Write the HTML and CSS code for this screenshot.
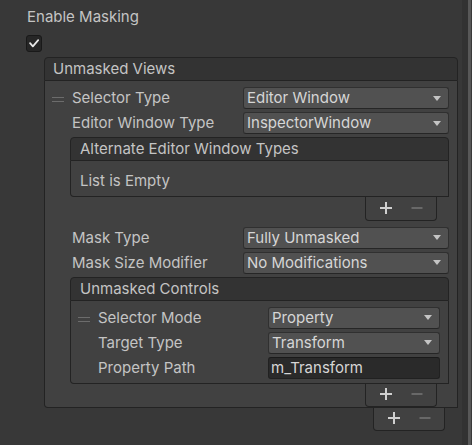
FILE: index.html
```html
<!DOCTYPE html>
<html>
<head>
<meta charset="utf-8">
<link rel="stylesheet" href="styles.css">
</head>
<body>
<div class="page">
  <div class="content">
    <div class="title">Enable Masking</div>
    <div class="check-row">
      <span class="checkbox">
        <svg width="16" height="17" viewBox="0 0 16 17"><polyline points="3.5,8 6.7,11.8 12.8,4.6" fill="none" stroke="#e8e8e8" stroke-width="2" stroke-linejoin="round" stroke-linecap="round"/></svg>
      </span>
    </div>

    <div class="list outer">
      <div class="list-header">Unmasked Views</div>
      <div class="list-body outer-body">
        <div class="element">
          <div class="handle-col"><span class="handle"></span></div>
          <div class="fields">
            <div class="row">
              <span class="label outer-label">Selector Type</span>
              <div class="dropdown"><span>Editor Window</span><svg class="arrow" width="8" height="5" viewBox="0 0 8 5"><polygon points="0,0 8,0 4,5" fill="#c4c4c4"/></svg></div>
            </div>
            <div class="row">
              <span class="label outer-label">Editor Window Type</span>
              <div class="dropdown"><span>InspectorWindow</span><svg class="arrow" width="8" height="5" viewBox="0 0 8 5"><polygon points="0,0 8,0 4,5" fill="#c4c4c4"/></svg></div>
            </div>

            <div class="list inner first">
              <div class="list-header inner-header">Alternate Editor Window Types</div>
              <div class="list-body empty">List is Empty</div>
              <div class="footer tall">
                <svg class="plus" width="12" height="12" viewBox="0 0 12 12"><path d="M6 0V12M0 6H12" stroke="#d0d0d0" stroke-width="2"/></svg>
                <svg class="minus" width="12" height="12" viewBox="0 0 12 12"><path d="M0.5 6H11.5" stroke="#767676" stroke-width="1.5"/></svg>
              </div>
            </div>

            <div class="row">
              <span class="label outer-label">Mask Type</span>
              <div class="dropdown"><span>Fully Unmasked</span><svg class="arrow" width="8" height="5" viewBox="0 0 8 5"><polygon points="0,0 8,0 4,5" fill="#c4c4c4"/></svg></div>
            </div>
            <div class="row">
              <span class="label outer-label">Mask Size Modifier</span>
              <div class="dropdown"><span>No Modifications</span><svg class="arrow" width="8" height="5" viewBox="0 0 8 5"><polygon points="0,0 8,0 4,5" fill="#c4c4c4"/></svg></div>
            </div>

            <div class="list inner second">
              <div class="list-header inner-header">Unmasked Controls</div>
              <div class="list-body inner-body">
                <div class="element">
                  <div class="handle-col"><span class="handle"></span></div>
                  <div class="fields">
                    <div class="row">
                      <span class="label inner-label">Selector Mode</span>
                      <div class="dropdown"><span>Property</span><svg class="arrow" width="8" height="5" viewBox="0 0 8 5"><polygon points="0,0 8,0 4,5" fill="#c4c4c4"/></svg></div>
                    </div>
                    <div class="row">
                      <span class="label inner-label">Target Type</span>
                      <div class="dropdown"><span>Transform</span><svg class="arrow" width="8" height="5" viewBox="0 0 8 5"><polygon points="0,0 8,0 4,5" fill="#c4c4c4"/></svg></div>
                    </div>
                    <div class="row last">
                      <span class="label inner-label">Property Path</span>
                      <div class="textfield">m_Transform</div>
                    </div>
                  </div>
                </div>
              </div>
              <div class="footer">
                <svg class="plus" width="12" height="12" viewBox="0 0 12 12"><path d="M6 0V12M0 6H12" stroke="#d0d0d0" stroke-width="2"/></svg>
                <svg class="minus" width="12" height="12" viewBox="0 0 12 12"><path d="M0.5 6H11.5" stroke="#767676" stroke-width="1.5"/></svg>
              </div>
            </div>
          </div>
        </div>
      </div>
      <div class="footer outer-footer">
        <svg class="plus" width="12" height="12" viewBox="0 0 12 12"><path d="M6 0V12M0 6H12" stroke="#d0d0d0" stroke-width="2"/></svg>
        <svg class="minus" width="12" height="12" viewBox="0 0 12 12"><path d="M0.5 6H11.5" stroke="#767676" stroke-width="1.5"/></svg>
      </div>
    </div>
  </div>
  <div class="edge"></div>
</div>
</body>
</html>
```

FILE: styles.css
```css
* { box-sizing: border-box; }

html, body {
  margin: 0;
  padding: 0;
  width: 472px;
  height: 445px;
  overflow: hidden;
  background: #383838;
}

body {
  font-family: "Inter", "Noto Sans", "DejaVu Sans", sans-serif;
  font-size: 15px;
  line-height: 22px;
  color: #c4c4c4;
}

.page {
  display: flex;
  height: 445px;
}

.content {
  width: 462px;
  padding-top: 6px;
}

.edge {
  flex: 1;
  background: linear-gradient(to right, #323232 0, #323232 6px, #585858 6px, #585858 9px, #3a3a3a 9px);
}

.title {
  height: 22px;
  padding-left: 27px;
}

.check-row {
  margin-top: 7px;
  height: 17px;
  padding-left: 26px;
  display: flex;
}

.checkbox {
  width: 16px;
  height: 17px;
  background: #262626;
  border: 1px solid #191919;
  border-radius: 3px;
  display: flex;
  align-items: center;
  justify-content: center;
  position: relative;
}

.checkbox svg {
  display: block;
}

.list.outer {
  margin-top: 5px;
  margin-left: 44px;
  width: 414px;
}

.list-header {
  height: 24px;
  background: #333333;
  border: 1px solid #232323;
  border-radius: 4px 4px 0 0;
  padding-left: 8px;
  white-space: nowrap;
}

.inner-header {
  padding-left: 9px;
}

.list-body {
  background: #414141;
  border: 1px solid #232323;
  border-top: none;
  border-radius: 0 0 0 4px;
}

.outer-body {
  padding: 6px 8px 0 0;
}

.element {
  display: flex;
}

.handle-col {
  width: 25px;
  flex: none;
  padding-left: 7px;
}

.handle {
  display: block;
  width: 12px;
  height: 5px;
  margin-top: 10px;
  border-top: 1px solid #6c6c6c;
  border-bottom: 1px solid #6c6c6c;
}

.fields {
  flex: 1;
  min-width: 0;
}

.row {
  display: flex;
  height: 22px;
  margin-bottom: 3px;
}

.row.last {
  margin-bottom: 0;
}

.label {
  flex: none;
  padding-left: 2px;
  white-space: nowrap;
}

.outer-label { width: 173px; }
.inner-label { width: 172px; }

.dropdown {
  flex: 1;
  display: flex;
  align-items: center;
  justify-content: space-between;
  background: #515151;
  border: 1px solid #303030;
  border-bottom-color: #262626;
  border-radius: 3px;
  padding: 0 7px 0 3px;
  color: #d6d6d6;
  white-space: nowrap;
}

.dropdown span {
  line-height: 20px;
}

.arrow {
  flex: none;
  display: block;
}

.textfield {
  flex: 1;
  background: #2a2a2a;
  border: 1px solid #212121;
  border-top-color: #1a1a1a;
  border-radius: 3px;
  padding-left: 2px;
  line-height: 20px;
  color: #d6d6d6;
}

.list.inner {
  display: flex;
  flex-direction: column;
}

.list.first {
  margin-bottom: 5.5px;
}

.empty {
  height: 36px;
  padding: 8.5px 0 0 9px;
  line-height: 22px;
}

.inner-body {
  padding: 6px 8px 4px 0;
}

.footer {
  align-self: flex-end;
  width: 72px;
  height: 23px;
  background: #414141;
  border: 1px solid #232323;
  border-top: none;
  border-radius: 0 0 4px 4px;
  display: flex;
  align-items: flex-start;
  padding: 4.5px 0 0 14px;
  gap: 19px;
  margin-right: 12px;
}

.footer.tall {
  height: 24px;
}

.footer svg {
  display: block;
  flex: none;
}

.outer-footer {
  margin-left: auto;
  margin-right: 13px;
}

.list.outer {
  display: flex;
  flex-direction: column;
}
```
